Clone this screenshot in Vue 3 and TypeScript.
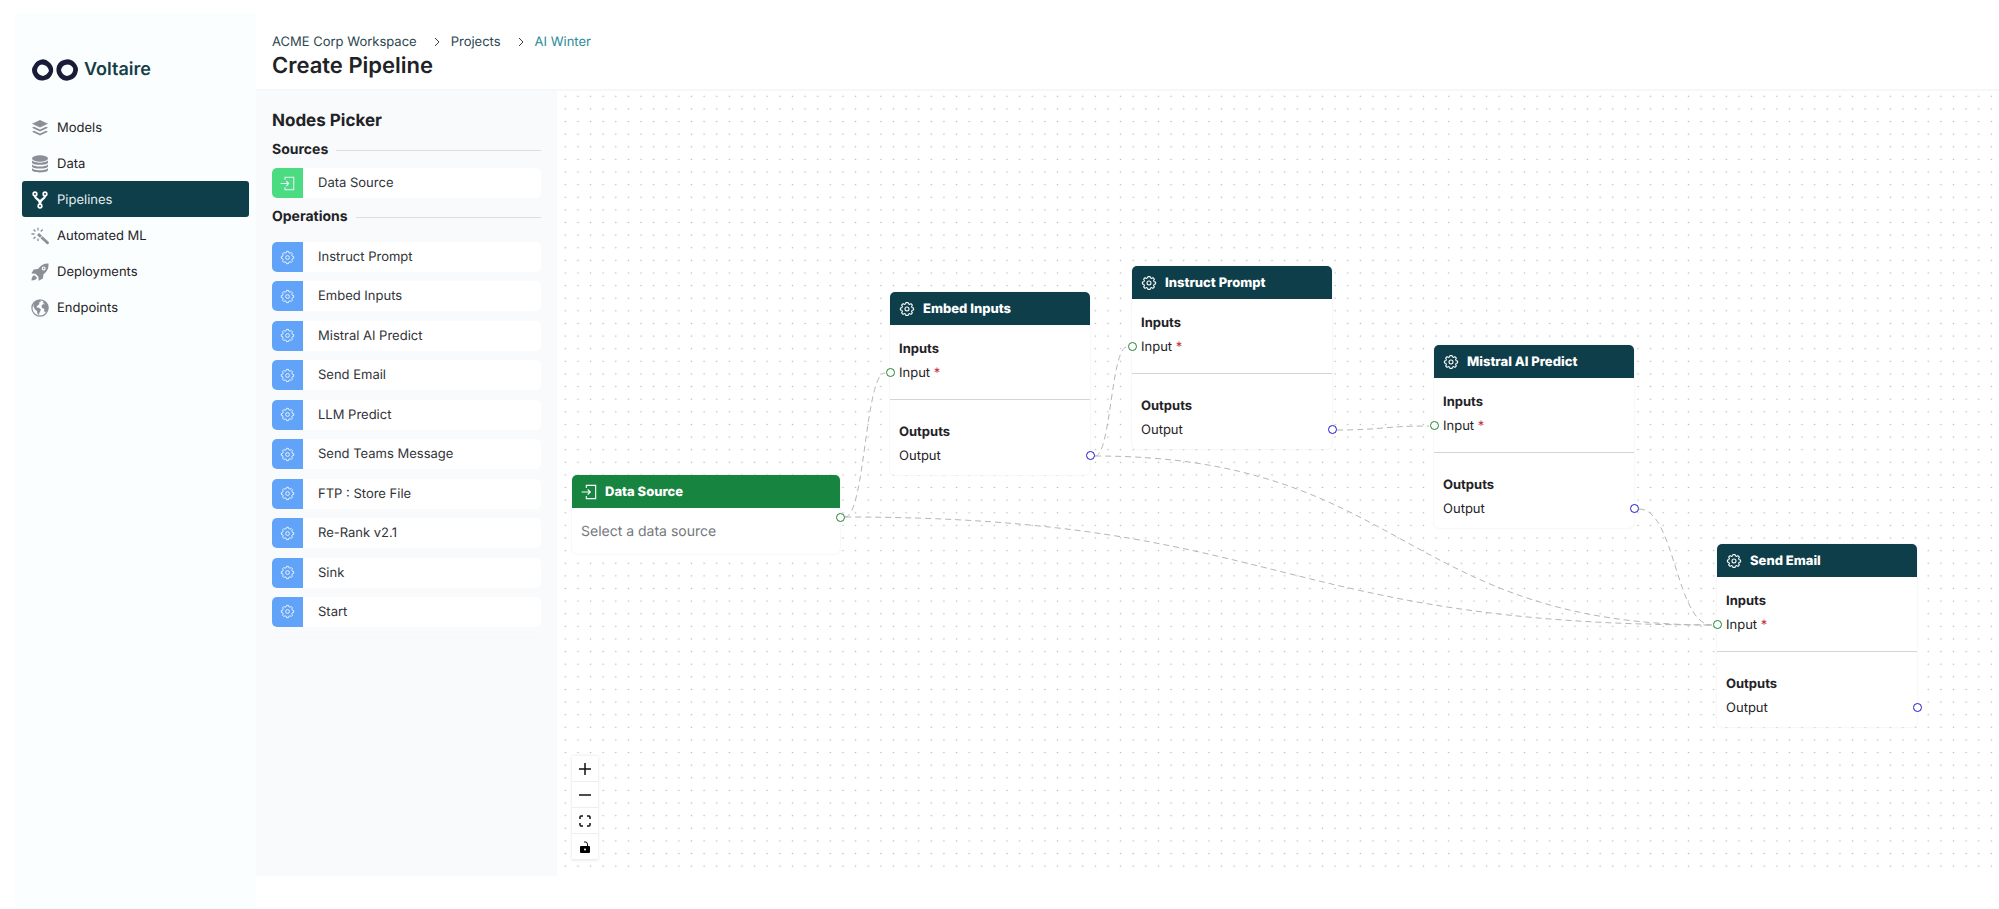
<script setup lang="ts">
import { ref } from 'vue'

interface FlowNode {
  id: string
  title: string
  kind: 'source' | 'operation'
  x: number
  y: number
}

interface Point {
  x: number
  y: number
}

const menu = [
  { label: 'Models', icon: 'layers' },
  { label: 'Data', icon: 'database' },
  { label: 'Pipelines', icon: 'fork' },
  { label: 'Automated ML', icon: 'wand' },
  { label: 'Deployments', icon: 'rocket' },
  { label: 'Endpoints', icon: 'globe' },
]
const activeItem = ref('Pipelines')

const operations = [
  'Instruct Prompt',
  'Embed Inputs',
  'Mistral AI Predict',
  'Send Email',
  'LLM Predict',
  'Send Teams Message',
  'FTP : Store File',
  'Re-Rank v2.1',
  'Sink',
  'Start',
]

const nodes: FlowNode[] = [
  { id: 'data', title: 'Data Source', kind: 'source', x: 15, y: 384 },
  { id: 'embed', title: 'Embed Inputs', kind: 'operation', x: 333, y: 201 },
  { id: 'instruct', title: 'Instruct Prompt', kind: 'operation', x: 575, y: 175 },
  { id: 'mistral', title: 'Mistral AI Predict', kind: 'operation', x: 877, y: 254 },
  { id: 'send', title: 'Send Email', kind: 'operation', x: 1160, y: 453 },
]

const edges: [string, string][] = [
  ['data', 'embed'],
  ['data', 'send'],
  ['embed', 'instruct'],
  ['embed', 'send'],
  ['instruct', 'mistral'],
  ['mistral', 'send'],
]

const zoom = 0.631
const gridGap = 20 * zoom
const portReach = 5

function findNode(id: string): FlowNode {
  return nodes.find((n) => n.id === id) as FlowNode
}

function outputPoint(n: FlowNode): Point {
  return n.kind === 'source'
    ? { x: n.x + 268 + portReach, y: n.y + 42 }
    : { x: n.x + 200 + portReach, y: n.y + 164 }
}

function edgePath([from, to]: [string, string]): string {
  const a = outputPoint(findNode(from))
  const target = findNode(to)
  const b = { x: target.x - portReach, y: target.y + 81 }
  const mid = (a.x + b.x) / 2
  return `M${a.x} ${a.y} C${mid} ${a.y} ${mid} ${b.y} ${b.x} ${b.y}`
}

function gearOutline(): string {
  const points: string[] = []
  const profile: [number, number][] = [
    [-14, 8],
    [-9, 10],
    [9, 10],
    [14, 8],
  ]
  for (let tooth = 0; tooth < 8; tooth++) {
    for (const [offset, radius] of profile) {
      const angle = ((tooth * 45 + offset) * Math.PI) / 180
      points.push(`${(12 + radius * Math.sin(angle)).toFixed(2)} ${(12 - radius * Math.cos(angle)).toFixed(2)}`)
    }
  }
  return `M${points.join('L')}Z`
}
const gear = gearOutline()
</script>

<template>
  <div class="app">
    <svg class="defs" aria-hidden="true">
      <symbol id="gear" viewBox="0 0 24 24">
        <g fill="none" stroke="currentColor" stroke-width="1.6" stroke-linejoin="round">
          <path :d="gear" />
          <circle cx="12" cy="12" r="3" />
        </g>
      </symbol>
      <symbol id="enter" viewBox="0 0 24 24">
        <g fill="none" stroke="currentColor" stroke-width="1.7">
          <path d="M8 6V2h14v20H8v-4" />
          <path d="M1 12h13M10 8l4 4-4 4" />
        </g>
      </symbol>
    </svg>

    <aside class="sidebar">
      <a class="brand" href="#">
        <svg class="brand-mark" viewBox="0 0 46 22" aria-hidden="true">
          <path fill="#191c39" fill-rule="evenodd" d="M8 1Q13-1 17 3Q22 7 21 13Q19 20 13 21Q6 23 2 17Q-2 11 2 6Q4 2 8 1ZM8 6Q5 8 5 12Q6 16 11 17Q15 16 17 12Q16 7 12 6Q10 5 8 6Z" />
          <path fill="#191c39" fill-rule="evenodd" d="M32 1Q37-1 41 2Q46 6 46 11Q45 19 38 21Q32 23 28 19Q23 14 25 7Q27 2 32 1ZM33 6Q30 7 29 11Q30 16 35 17Q40 16 41 12Q42 8 38 6Q36 5 33 6Z" />
        </svg>
        <span>Voltaire</span>
      </a>
      <nav class="menu" aria-label="Main">
        <a
          v-for="item in menu"
          :key="item.label"
          href="#"
          class="menu-item"
          :class="{ active: item.label === activeItem }"
          @click.prevent="activeItem = item.label"
        >
          <svg class="menu-icon" viewBox="0 0 18 18" fill="currentColor" aria-hidden="true">
            <template v-if="item.icon === 'layers'">
              <path d="M9 1l8 3.7-8 3.8-8-3.8z" />
              <path d="M1 8.7l2-.9 6 2.8 6-2.8 2 .9-8 3.8z" />
              <path d="M1 12.7l2-.9 6 2.8 6-2.8 2 .9-8 3.8z" />
            </template>
            <template v-else-if="item.icon === 'database'">
              <ellipse cx="9" cy="3.5" rx="8" ry="3.2" />
              <path d="M1 5.6c3 2.7 13 2.7 16 0v1.8c0 3.2-16 3.2-16 0z" />
              <path d="M1 9.4c3 2.7 13 2.7 16 0v1.8c0 3.2-16 3.2-16 0z" />
              <path d="M1 13.2c3 2.7 13 2.7 16 0V15c0 3.2-16 3.2-16 0z" />
            </template>
            <g v-else-if="item.icon === 'fork'" fill="none" stroke="currentColor" stroke-width="1.7">
              <circle cx="4" cy="3" r="1.8" />
              <circle cx="14" cy="3" r="1.8" />
              <circle cx="9" cy="15" r="1.8" />
              <path stroke-width="2.2" d="M4 5c0 4 5 2 5 8M14 5c0 4-5 2-5 8" />
            </g>
            <template v-else-if="item.icon === 'wand'">
              <path d="M6 8l2-2 3 2.8-2 2zM9.5 11.3l2-2 6 5.5q.9 1 0 2t-2 0z" />
              <path fill="none" stroke="currentColor" stroke-width="1.3" d="M7 .8v2.7M2.5 2.5l2 2M.5 7h3M2.5 11.7l2-2M7 11.5V14M11.7 2.5l-2 2" />
            </template>
            <path v-else-if="item.icon === 'rocket'" fill-rule="evenodd" d="M17.5.5c.3 5-1.5 8.2-5 10.7l-.6 4.3-4.2 2.3-.3-4-3-3-4-.3 2.3-4.1L7 6C9.5 2.2 13 .3 17.5.5zM12.7 3.4a2 2 0 1 0 0 4 2 2 0 0 0 0-4zm0 1.2a.8.8 0 1 1 0 1.6.8.8 0 0 1 0-1.6zM3.3 12.2L6 14.8c-.5 1.7-2.5 2.7-5.5 2.7.1-3 1-4.8 2.8-5.3z" />
            <template v-else>
              <circle cx="9" cy="9" r="8.1" fill="none" stroke="currentColor" stroke-width="1.2" />
              <path d="M2.5 4.5Q5 .8 9 1l1 1.5-2 1 .5 1.5L6 7l-.5 1.5 2.5.3 2 2-1.5 2.7L8 16l-1.500-1-.5-3-2-1.500-1.500-3zM11.500 3l2-1 3 3 .8 4-1.300 3-1.500 1.500-1.500-1.500.5-2-2.500-1-.5-2.500 2-1.500 1.500.5z" />
            </template>
          </svg>
          <span>{{ item.label }}</span>
        </a>
      </nav>
    </aside>

    <main class="main">
      <header class="header">
        <nav aria-label="Breadcrumb">
          <ol class="crumbs">
            <li><a href="#">ACME Corp Workspace</a></li>
            <li>
              <svg viewBox="0 0 6 10" aria-hidden="true"><path d="M1 1l4 4-4 4" /></svg>
              <a href="#">Projects</a>
            </li>
            <li>
              <svg viewBox="0 0 6 10" aria-hidden="true"><path d="M1 1l4 4-4 4" /></svg>
              <a href="#" class="current" aria-current="page">AI Winter</a>
            </li>
          </ol>
        </nav>
        <h1>Create Pipeline</h1>
      </header>

      <div class="workspace">
        <section class="picker">
          <h2>Nodes Picker</h2>
          <h3>Sources</h3>
          <button type="button" class="pick source">
            <span class="pick-icon"><svg viewBox="0 0 24 24" aria-hidden="true"><use href="#enter" /></svg></span>
            <span class="pick-label">Data Source</span>
          </button>
          <h3>Operations</h3>
          <ul class="pick-list">
            <li v-for="name in operations" :key="name">
              <button type="button" class="pick">
                <span class="pick-icon"><svg viewBox="0 0 24 24" aria-hidden="true"><use href="#gear" /></svg></span>
                <span class="pick-label">{{ name }}</span>
              </button>
            </li>
          </ul>
        </section>

        <section class="canvas" aria-label="Pipeline canvas">
          <svg class="layer" aria-hidden="true">
            <defs>
              <pattern id="dots" x="2" y="-1" :width="gridGap" :height="gridGap" patternUnits="userSpaceOnUse">
                <circle :cx="gridGap / 2" :cy="gridGap / 2" r="0.8" fill="#b9b9bd" />
              </pattern>
            </defs>
            <rect width="100%" height="100%" fill="url(#dots)" />
            <path v-for="edge in edges" :key="edge.join('-')" class="edge" :d="edgePath(edge)" />
          </svg>

          <article
            v-for="node in nodes"
            :key="node.id"
            class="node"
            :class="node.kind"
            :style="{ left: node.x + 'px', top: node.y + 'px' }"
          >
            <h4>
              <svg viewBox="0 0 24 24" aria-hidden="true">
                <use :href="node.kind === 'source' ? '#enter' : '#gear'" />
              </svg>
              {{ node.title }}
            </h4>
            <div v-if="node.kind === 'source'" class="source-body">
              <select aria-label="Data source">
                <option>Select a data source</option>
              </select>
              <i class="port out"></i>
            </div>
            <template v-else>
              <div class="ports inputs">
                <h5>Inputs</h5>
                <p>Input <span class="required">*</span><i class="port in"></i></p>
              </div>
              <div class="ports outputs">
                <h5>Outputs</h5>
                <p>Output<i class="port out"></i></p>
              </div>
            </template>
          </article>

          <div class="controls">
            <button type="button" aria-label="Zoom in">
              <svg viewBox="0 0 12 12"><path d="M6 0v12M0 6h12" /></svg>
            </button>
            <button type="button" aria-label="Zoom out">
              <svg viewBox="0 0 12 12"><path d="M0 6h12" /></svg>
            </button>
            <button type="button" aria-label="Fit view">
              <svg viewBox="0 0 12 12"><path d="M1 4V2q0-1 1-1h2M8 1h2q1 0 1 1v2M11 8v2q0 1-1 1H8M4 11H2q-1 0-1-1V8" /></svg>
            </button>
            <button type="button" aria-label="Toggle interactivity">
              <svg viewBox="0 0 12 12">
                <path class="solid" fill-rule="evenodd" d="M2 5h8q1 0 1 1v5q0 1-1 1H2q-1 0-1-1V6q0-1 1-1zM6 7.5a1 1 0 1 0 0 2 1 1 0 0 0 0-2z" />
                <path class="shackle" d="M5 1q3-1 3.5 2v2" />
              </svg>
            </button>
          </div>
        </section>
      </div>
    </main>
  </div>
</template>

<style>
body {
  margin: 0;
  background: #fff;
}
</style>

<style scoped>
.app,
.app * {
  box-sizing: border-box;
}
.app {
  display: grid;
  grid-template-columns: 241px minmax(0, 1fr);
  height: 100vh;
  padding-left: 15px;
  overflow: hidden;
  font-family: Inter, 'Liberation Sans', sans-serif;
  font-size: 13px;
  color: #1f2226;
  text-rendering: geometricPrecision;
}
.defs {
  position: absolute;
  width: 0;
  height: 0;
}
a {
  color: inherit;
  text-decoration: none;
}
button,
select {
  margin: 0;
  padding: 0;
  border: 0;
  font: inherit;
  color: inherit;
  text-align: left;
  text-rendering: inherit;
  background: none;
  cursor: pointer;
}
h1,
h2,
h3,
h4,
h5,
p,
ol,
ul {
  margin: 0;
  padding: 0;
  list-style: none;
}

.sidebar {
  margin-top: 13px;
  padding: 44px 7px 0;
  background: #fafefe;
}
.brand {
  display: flex;
  align-items: center;
  gap: 6px;
  height: 26px;
  padding-left: 10px;
  font-size: 18px;
  font-weight: 600;
  line-height: 26px;
  color: #153f47;
}
.brand-mark {
  width: 46px;
  height: 22px;
}
.menu {
  display: grid;
  margin-top: 26px;
}
.menu-item {
  display: flex;
  align-items: center;
  gap: 8px;
  height: 36px;
  padding: 1px 0 0 9px;
  border-radius: 3px;
  line-height: 20px;
}
.menu-icon {
  width: 18px;
  height: 18px;
  color: #8b8f98;
}
.menu-item.active {
  color: #e4eff1;
  background: #0e3e49;
}
.active .menu-icon {
  color: #fff;
}

.main {
  display: flex;
  flex-direction: column;
  min-width: 0;
  height: 100vh;
  padding-bottom: 33px;
}
.header {
  flex: none;
  height: 91px;
  padding: 32px 16px 0;
  border-bottom: 2px solid #f6f7f8;
}
.crumbs {
  display: flex;
  gap: 17px;
  line-height: 20px;
  color: #2b474f;
}
.crumbs li {
  display: flex;
  align-items: center;
  gap: 11px;
}
.crumbs svg {
  width: 6px;
  height: 10px;
  fill: none;
  stroke: #3c4043;
  stroke-width: 1;
}
.crumbs .current {
  color: #2a8c98;
}
h1 {
  font-size: 22px;
  font-weight: 600;
  line-height: 29px;
}

.workspace {
  display: flex;
  flex: 1;
  min-height: 0;
}
.picker {
  flex: none;
  width: 301px;
  padding: 17px 16px 0;
  background: #f8fafc;
}
h2 {
  font-size: 17px;
  font-weight: 700;
  line-height: 26px;
}
h3 {
  display: flex;
  align-items: center;
  gap: 8px;
  margin-top: 6px;
  font-size: 14px;
  font-weight: 700;
  line-height: 20px;
}
h3::after {
  flex: 1;
  height: 1px;
  background: #dcdee1;
  content: '';
}
.pick {
  display: flex;
  width: 100%;
  height: 30px;
  border-radius: 5px;
  background: #fff;
  overflow: hidden;
}
.pick.source {
  margin: 8px 0 9px;
}
.pick-icon {
  display: grid;
  place-items: center;
  width: 31px;
  height: 30px;
  color: #e6f1ff;
  background: #60a3f8;
}
.source .pick-icon {
  background: #4bdb80;
}
.pick-icon svg {
  width: 15px;
  height: 15px;
}
.pick-label {
  padding-left: 15px;
  line-height: 31px;
  color: #303338;
}
.pick-list {
  display: flex;
  flex-direction: column;
  justify-content: space-between;
  height: 406px;
  margin-top: 5px;
  padding: 10px 0;
  border-bottom: 1px solid #f8f7f9;
}

.canvas {
  position: relative;
  flex: 1;
  min-width: 0;
  overflow: hidden;
  background: #fff;
}
.layer {
  position: absolute;
  inset: 0;
  width: 100%;
  height: 100%;
}
.edge {
  fill: none;
  stroke: #b5b6b9;
  stroke-width: 1;
  stroke-dasharray: 6 4;
}
.node {
  position: absolute;
  width: 200px;
  border-radius: 5px;
  background: #fff;
  box-shadow: 0 0 2px #e4e5e8;
}
.node.source {
  width: 268px;
}
h4 {
  display: flex;
  align-items: center;
  gap: 8px;
  height: 33px;
  padding: 1px 0 0 9px;
  border-radius: 5px 5px 0 0;
  font-size: 13px;
  font-weight: 800;
  color: #fff;
  background: #0e3e49;
}
.source h4 {
  background: #178440;
}
h4 svg {
  width: 16px;
  height: 16px;
}
.source-body {
  position: relative;
  padding: 11px 9px;
}
.source-body select {
  display: block;
  width: 100%;
  height: 24px;
  appearance: none;
  font-size: 14px;
  color: #74777d;
}
.source-body .port {
  top: 5px;
}
.ports {
  padding: 12px 9px 0;
}
.inputs {
  height: 75px;
  border-bottom: 1px solid #d3d5d8;
}
.outputs {
  height: 75px;
  padding-top: 20px;
}
h5 {
  font-size: 13px;
  font-weight: 700;
  line-height: 24px;
}
.ports p {
  position: relative;
  margin: 0 -9px;
  padding: 0 9px;
  line-height: 24px;
}
.required {
  color: #c02b35;
}
.port {
  position: absolute;
  top: 7px;
  width: 9px;
  height: 9px;
  border: 1px solid #1f8530;
  border-radius: 50%;
  background: #fff;
}
.port.in {
  left: -4px;
}
.port.out {
  right: -5px;
}
.ports .port.out {
  border-color: #1c18cc;
}

.controls {
  position: absolute;
  bottom: 16px;
  left: 15px;
  display: grid;
  box-shadow: 0 0 3px #dfe0e2;
  background: #fff;
}
.controls button {
  display: grid;
  place-items: center;
  width: 26px;
  height: 26px;
  border-bottom: 1px solid #eee;
}
.controls svg {
  width: 12px;
  height: 12px;
  fill: none;
  stroke: #111;
  stroke-width: 1.5;
}
.controls .solid {
  fill: #000;
  stroke: none;
}
.controls .shackle {
  stroke-width: 1;
}
</style>
